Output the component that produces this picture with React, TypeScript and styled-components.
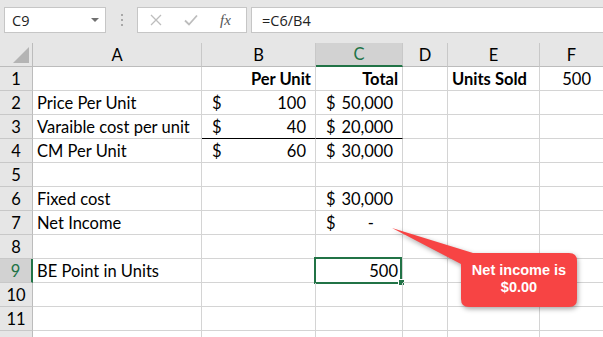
import React from 'react';
import styled, { createGlobalStyle } from 'styled-components';

const GlobalStyle = createGlobalStyle`
  html, body {
    margin: 0;
    padding: 0;
    background: #fff;
  }
  body {
    overflow: hidden;
    font-family: Lato, "Liberation Sans", sans-serif;
  }
`;

const GREEN = '#217346';
const GRID = '#d4d4d4';

const Screen = styled.div`
  position: relative;
  width: 603px;
  height: 337px;
  overflow: hidden;
  background: #fff;
`;

// ---------- formula bar ----------

const FormulaBar = styled.div`
  display: flex;
  align-items: flex-start;
  height: 43px;
  box-sizing: border-box;
  padding: 7px 0 0 4px;
  background: #e6e6e6;
`;

const NameBox = styled.div`
  display: flex;
  align-items: center;
  justify-content: space-between;
  width: 102px;
  height: 26px;
  box-sizing: border-box;
  padding: 0 6px 0 7px;
  border: 1px solid #c6c6c6;
  background: #fff;
  font-family: "Open Sans", "Liberation Sans", sans-serif;
  font-size: 14.5px;
  color: #222;
`;

const DropArrow = styled.span`
  width: 0;
  height: 0;
  border-left: 4px solid transparent;
  border-right: 4px solid transparent;
  border-top: 4px solid #707070;
`;

const Grip = styled.div`
  display: flex;
  flex-direction: column;
  gap: 3px;
  width: 31px;
  align-items: center;
  padding-top: 7px;
  box-sizing: border-box;

  span {
    width: 2px;
    height: 2px;
    background: #a8a8a8;
  }
`;

const FxGroup = styled.div`
  display: flex;
  align-items: center;
  gap: 22px;
  width: 110px;
  height: 26px;
  box-sizing: border-box;
  padding-left: 12px;
  border: 1px solid #c6c6c6;
  background: #fff;
`;

const FxLabel = styled.span`
  font-family: "Liberation Serif", serif;
  font-style: italic;
  font-size: 15px;
  color: #555;
`;

const FormulaInput = styled.div`
  flex: 1;
  display: flex;
  align-items: center;
  height: 26px;
  margin-left: 4px;
  box-sizing: border-box;
  padding-left: 10px;
  border: 1px solid #c6c6c6;
  border-right: none;
  background: #fff;
  font-family: "Open Sans", "Liberation Sans", sans-serif;
  font-size: 14.5px;
  color: #222;
`;

// ---------- sheet ----------

const Sheet = styled.div`
  display: grid;
  grid-template-columns: 33px 169px 114px 87px 45px 92px 64px 40px;
  grid-auto-rows: 24px;
  font-size: 16.5px;
  color: #000;
`;

const Corner = styled.div`
  display: flex;
  align-items: flex-end;
  justify-content: flex-end;
  padding: 0 3px 3px 0;
  box-sizing: border-box;
  background: #e6e6e6;
  border-right: 1px solid #bcbcbc;
  border-bottom: 1px solid #bcbcbc;
`;

const ColHead = styled.div<{ $active?: boolean }>`
  display: flex;
  align-items: center;
  justify-content: center;
  box-sizing: border-box;
  line-height: 20px;
  background: ${(p) => (p.$active ? '#d2d2d2' : '#e6e6e6')};
  color: ${(p) => (p.$active ? GREEN : '#000')};
  border-right: 1px solid #c8c8c8;
  border-bottom: ${(p) => (p.$active ? `2px solid ${GREEN}` : '1px solid #bcbcbc')};
`;

const RowHead = styled.div<{ $active?: boolean }>`
  display: flex;
  align-items: flex-end;
  justify-content: center;
  box-sizing: border-box;
  padding-bottom: 1px;
  line-height: 20px;
  background: ${(p) => (p.$active ? '#d2d2d2' : '#e6e6e6')};
  color: ${(p) => (p.$active ? GREEN : '#000')};
  border-right: ${(p) => (p.$active ? `2px solid ${GREEN}` : '1px solid #bcbcbc')};
  border-bottom: 1px solid #c8c8c8;
`;

const Cell = styled.div<{
  $align?: string;
  $bold?: boolean;
  $under?: boolean;
  $selected?: boolean;
  $pad?: number;
}>`
  position: relative;
  display: flex;
  align-items: flex-end;
  justify-content: ${(p) => p.$align || 'flex-start'};
  box-sizing: border-box;
  padding: 0 ${(p) => p.$pad ?? 4}px 1px 4px;
  line-height: 20px;
  white-space: nowrap;
  font-weight: ${(p) => (p.$bold ? 700 : 400)};
  border-right: 1px solid ${GRID};
  border-bottom: 1px solid ${(p) => (p.$under ? '#000' : GRID)};

  ${(p) =>
    p.$selected &&
    `
    &::before {
      content: '';
      position: absolute;
      left: -2px;
      top: -2px;
      width: 88px;
      height: 27px;
      box-sizing: border-box;
      border: 2px solid ${GREEN};
    }
    &::after {
      content: '';
      position: absolute;
      right: -3px;
      bottom: -4px;
      width: 7px;
      height: 7px;
      box-sizing: border-box;
      background: ${GREEN};
      border: 1px solid #fff;
    }
  `}
`;

const Dollar = styled.span`
  padding-left: 6px;
`;

const Amount = styled.span<{ $pad?: number }>`
  padding-right: ${(p) => p.$pad ?? 5}px;
`;

// ---------- callout ----------

const Callout = styled.div`
  position: absolute;
  left: 380px;
  top: 220px;
  width: 210px;
  height: 100px;

  svg {
    display: block;
    filter: drop-shadow(1px 2px 2.5px rgba(0, 0, 0, 0.35));
  }
`;

const CalloutText = styled.div`
  position: absolute;
  left: 81px;
  top: 33px;
  width: 116px;
  height: 52px;
  display: flex;
  flex-direction: column;
  align-items: center;
  justify-content: center;
  font-family: "Liberation Sans", Arial, sans-serif;
  font-weight: 700;
  font-size: 14.5px;
  line-height: 17px;
  color: #fff;
`;

type CellData = {
  text?: string;
  align?: string;
  bold?: boolean;
  acc?: string;
  pad?: number;
  under?: boolean;
  selected?: boolean;
};

const cols = ['A', 'B', 'C', 'D', 'E', 'F', 'G'];

const rows: CellData[][] = [
  [{}, { text: 'Per Unit', bold: true, align: 'flex-end' }, { text: 'Total', bold: true, align: 'flex-end' }, {}, { text: 'Units Sold', bold: true }, { text: '500', align: 'flex-end', pad: 12 }, {}],
  [{ text: 'Price Per Unit' }, { acc: '100' }, { acc: '50,000' }, {}, {}, {}, {}],
  [{ text: 'Varaible cost per unit' }, { acc: '40', under: true }, { acc: '20,000', under: true }, {}, {}, {}, {}],
  [{ text: 'CM Per Unit' }, { acc: '60' }, { acc: '30,000' }, {}, {}, {}, {}],
  [{}, {}, {}, {}, {}, {}, {}],
  [{ text: 'Fixed cost' }, {}, { acc: '30,000' }, {}, {}, {}, {}],
  [{ text: 'Net Income' }, {}, { acc: '-', pad: 24 }, {}, {}, {}, {}],
  [{}, {}, {}, {}, {}, {}, {}],
  [{ text: 'BE Point in Units' }, {}, { text: '500', align: 'flex-end', selected: true }, {}, {}, {}, {}],
  [{}, {}, {}, {}, {}, {}, {}],
  [{}, {}, {}, {}, {}, {}, {}],
  [{}, {}, {}, {}, {}, {}, {}],
];

const renderCell = (c: CellData, key: string) => {
  if (c.acc) {
    return (
      <Cell key={key} $align="space-between" $under={c.under}>
        <Dollar>$</Dollar>
        <Amount $pad={c.pad}>{c.acc}</Amount>
      </Cell>
    );
  }
  return (
    <Cell
      key={key}
      $align={c.align}
      $bold={c.bold}
      $under={c.under}
      $selected={c.selected}
      $pad={c.pad}
    >
      {c.text}
    </Cell>
  );
};

export default function App() {
  return (
    <Screen>
      <GlobalStyle />
      <FormulaBar>
        <NameBox>
          C9
          <DropArrow />
        </NameBox>
        <Grip>
          <span />
          <span />
          <span />
        </Grip>
        <FxGroup>
          <svg width="12" height="12" viewBox="0 0 12 12">
            <path d="M1 1 L11 11 M11 1 L1 11" stroke="#bdbdbd" strokeWidth="1.3" fill="none" />
          </svg>
          <svg width="14" height="12" viewBox="0 0 14 12">
            <path d="M1 6.5 L5 10.5 L13 1.5" stroke="#bdbdbd" strokeWidth="1.8" fill="none" />
          </svg>
          <FxLabel>fx</FxLabel>
        </FxGroup>
        <FormulaInput>=C6/B4</FormulaInput>
      </FormulaBar>

      <Sheet>
        <Corner>
          <svg width="16" height="16" viewBox="0 0 16 16">
            <path d="M16 0 L16 16 L0 16 Z" fill="#b4b4b4" />
          </svg>
        </Corner>
        {cols.map((c) => (
          <ColHead key={c} $active={c === 'C'}>
            {c === 'G' ? '' : c}
          </ColHead>
        ))}
        {rows.map((r, i) => (
          <React.Fragment key={i}>
            <RowHead $active={i === 8}>{i < 11 ? i + 1 : ''}</RowHead>
            {r.map((c, j) => renderCell(c, `${i}-${j}`))}
          </React.Fragment>
        ))}
      </Sheet>

      <Callout>
        <svg width="210" height="100" viewBox="0 0 210 100">
          <path
            d="M12 8 L93 33 H189 Q197 33 197 41 V79 Q197 87 189 87 H89 Q81 87 81 79 V44 Z"
            fill="#f74444"
          />
        </svg>
        <CalloutText>
          <span>Net income is</span>
          <span>$0.00</span>
        </CalloutText>
      </Callout>
    </Screen>
  );
}
